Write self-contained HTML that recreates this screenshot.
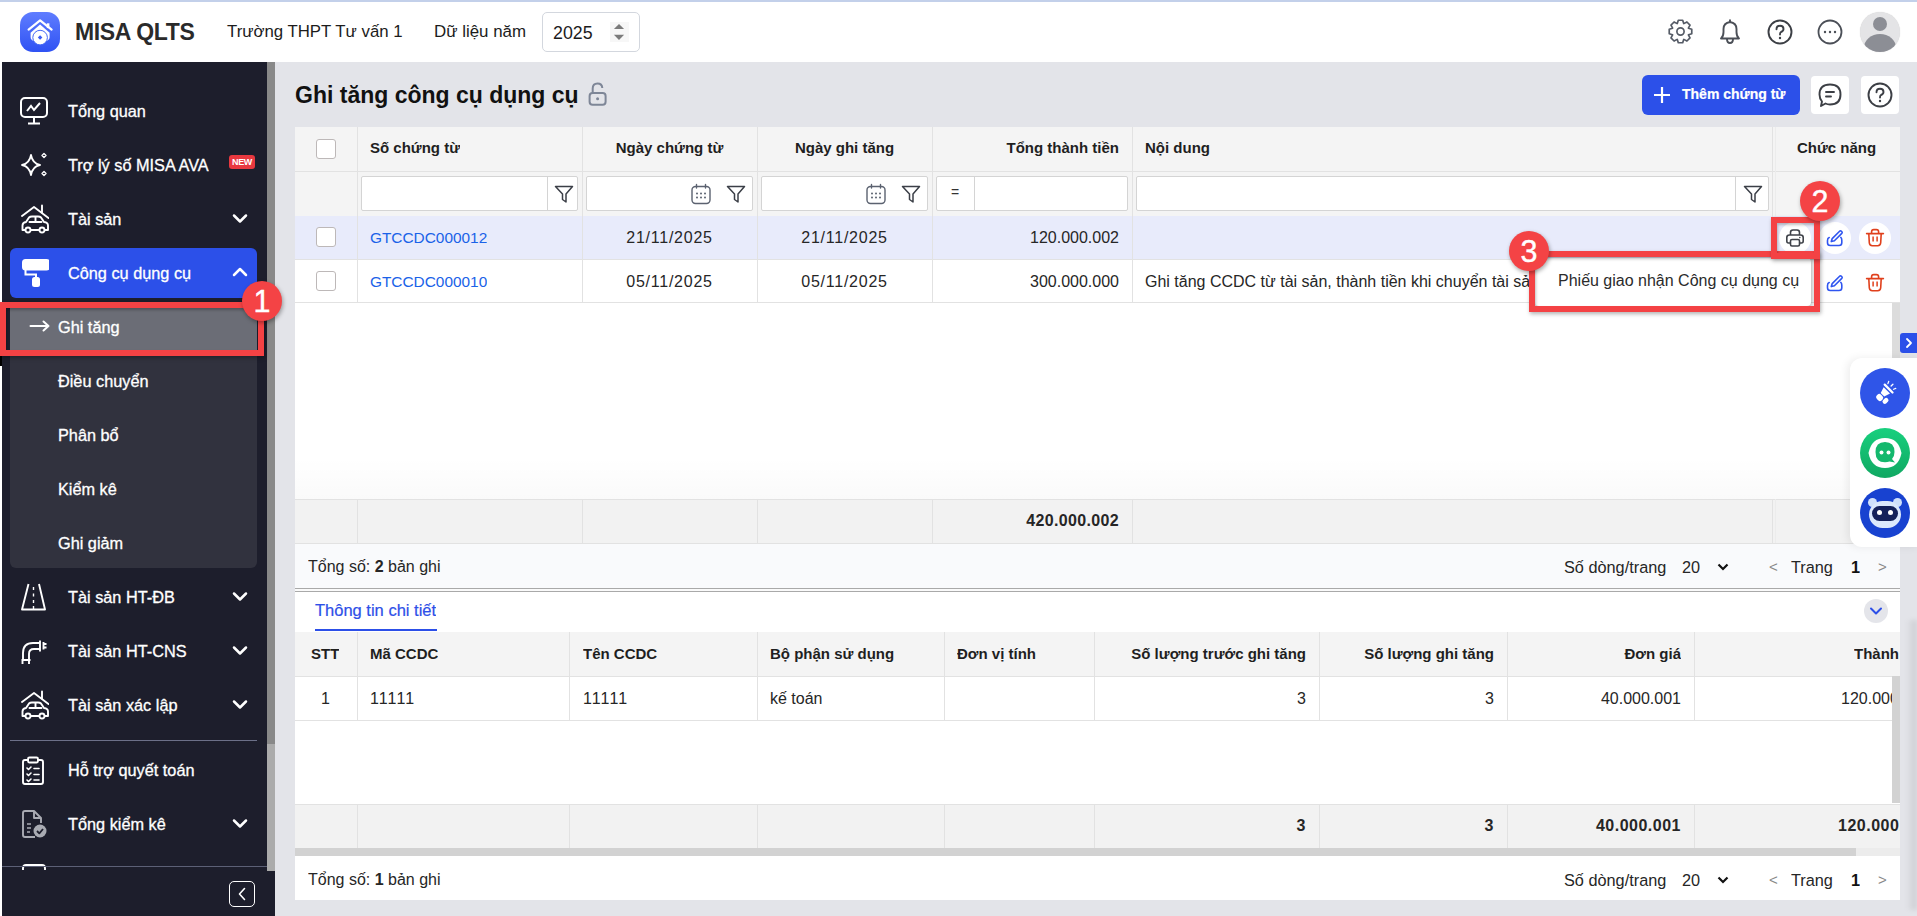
<!DOCTYPE html>
<html><head><meta charset="utf-8">
<style>
*{box-sizing:border-box;margin:0;padding:0}
html,body{width:1917px;height:916px;overflow:hidden;background:#e3e4e9;font-family:"Liberation Sans",sans-serif;color:#212121}
.a{position:absolute}
#hdr{left:0;top:0;width:1917px;height:62px;background:#fff;border-top:2px solid #c3d0ea}
#side{left:2px;top:62px;width:273px;height:854px;background:#1d1e2c;overflow:hidden}
.mi{position:absolute;left:0;width:265px;height:54px;color:#fff;font-size:16.3px}
.mi .t{position:absolute;left:66px;top:0;line-height:54px;white-space:nowrap;-webkit-text-stroke:0.3px #fff}
.mi svg.ic{position:absolute;left:17px;top:12px}
.chev{position:absolute;left:229px;top:21px}
.sub{position:absolute;left:56px;line-height:50px;color:#fff;font-size:16.3px;white-space:nowrap;-webkit-text-stroke:0.3px #fff}
.tbl{background:#fff}
.cell{position:absolute;white-space:nowrap;overflow:hidden}
.vl{position:absolute;width:1px;background:#e2e2e2}
.hl{position:absolute;height:1px;background:#e2e2e2}
.th{font-weight:bold;font-size:15px;color:#1f1f1f}
.cb{position:absolute;width:20px;height:20px;border:1px solid #bdb8b8;border-radius:3px;background:#fff}
.finp{position:absolute;height:35px;border:1px solid #d4d4d4;border-radius:2px;background:#fff}
.badge{position:absolute;width:40px;height:40px;border-radius:50%;background:#f44345;color:#fff;font-size:30.5px;text-align:center;line-height:41px;box-shadow:1px 2px 4px rgba(0,0,0,.35);-webkit-text-stroke:0.4px #fff}
.rbox{position:absolute;border:6px solid #f44244;box-shadow:1px 2px 4px rgba(0,0,0,.3),inset 1px 2px 3px rgba(0,0,0,.25)}
</style></head><body>
<div id="hdr" class="a">
 <div class="a" style="left:20px;top:10px;width:40px;height:40px;border-radius:13px;background:linear-gradient(180deg,#5f7dff 0%,#2f52f3 100%)">
  <svg width="40" height="40" viewBox="0 0 40 40" class="a" style="left:0;top:0"><path d="M8.6 17.6 L20.1 8.3 L31.6 17.6" fill="none" stroke="#fff" stroke-width="2.2" stroke-linecap="round" stroke-linejoin="round"/><rect x="26.8" y="11.3" width="2.6" height="4.8" fill="#fff"/><path d="M10.6 20.8 L20.1 12.4 L29.6 20.8 V25 Q29.6 28 26 29 H14 Q10.6 28 10.6 25 Z" fill="#fff"/><circle cx="20.1" cy="25.6" r="7.3" fill="#fff" stroke="#4367f6" stroke-width="1"/><rect x="18.5" y="23.8" width="3.2" height="3.2" fill="#3b5cf5" transform="rotate(45 20.1 25.4)"/></svg>
 </div>
 <div class="a" style="left:75px;top:16px;font-size:23px;font-weight:bold;color:#2a2a2a;line-height:28px;letter-spacing:-0.35px">MISA QLTS</div>
 <div class="a" style="left:227px;top:19px;font-size:16.8px;color:#1c1c1c;line-height:22px">Trường THPT Tư vấn 1</div>
 <div class="a" style="left:434px;top:19px;font-size:16.9px;color:#1c1c1c;line-height:22px">Dữ liệu năm</div>
 <div class="a" style="left:542px;top:10px;width:98px;height:40px;border:1px solid #d3d7de;border-radius:5px;background:#fff">
  <div class="a" style="left:10px;top:9px;font-size:17.8px;color:#1c1c1c;line-height:22px">2025</div>
  <div class="a" style="left:67px;top:9px;width:19px;height:20px;background:#f7f7f7"></div>
  <svg class="a" style="left:67px;top:9px" width="19" height="20" viewBox="0 0 19 20"><path d="M9 1.9 L14.1 7 H3.9 Z" fill="#7b7b7b"/><path d="M9 18 L14.1 12.8 H3.9 Z" fill="#7b7b7b"/></svg>
 </div>
 <!-- gear -->
 <svg class="a" style="left:1667px;top:16px" width="27" height="27" viewBox="0 0 24 24" fill="none" stroke="#555b66" stroke-width="1.5">
  <path d="M19.05 9.15 L22.01 10.05 L22.01 13.95 L19.05 14.85 L19.00 14.97 L20.46 17.70 L17.70 20.46 L14.97 19.00 L14.85 19.05 L13.95 22.01 L10.05 22.01 L9.15 19.05 L9.03 19.00 L6.30 20.46 L3.54 17.70 L5.00 14.97 L4.95 14.85 L1.99 13.95 L1.99 10.05 L4.95 9.15 L5.00 9.03 L3.54 6.30 L6.30 3.54 L9.03 5.00 L9.15 4.95 L10.05 1.99 L13.95 1.99 L14.85 4.95 L14.97 5.00 L17.70 3.54 L20.46 6.30 L19.00 9.03Z" stroke-linejoin="round"/>
  <circle cx="12" cy="12" r="3.2"/>
 </svg>
 <!-- bell -->
 <svg class="a" style="left:1717px;top:15px" width="26" height="28" viewBox="0 0 26 28" fill="none" stroke="#4b4f57" stroke-width="1.9">
  <path d="M4 21.5 Q6.5 19.5 6.5 15 V12 Q6.5 6 13 5 Q19.5 6 19.5 12 V15 Q19.5 19.5 22 21.5 Z" stroke-linejoin="round"/>
  <path d="M13 2.5 V5"/><path d="M10 22 Q10 26 13 26 Q16 26 16 22"/>
 </svg>
 <!-- help -->
 <svg class="a" style="left:1767px;top:17px" width="26" height="26" viewBox="0 0 26 26" fill="none" stroke="#3c3f45" stroke-width="1.9">
  <circle cx="13" cy="13" r="11.5"/>
  <path d="M9.5 10.2 Q9.5 6.8 13 6.8 Q16.5 6.8 16.5 10 Q16.5 12 14 13 Q13 13.6 13 15.5" stroke-linecap="round"/>
  <circle cx="13" cy="19" r="1.2" fill="#3c3f45" stroke="none"/>
 </svg>
 <!-- more -->
 <svg class="a" style="left:1817px;top:17px" width="26" height="26" viewBox="0 0 26 26" fill="none" stroke="#4b4f57" stroke-width="1.8">
  <circle cx="13" cy="13" r="11.5"/>
  <circle cx="8" cy="13" r="1.2" fill="#4b4f57" stroke="none"/><circle cx="13" cy="13" r="1.2" fill="#4b4f57" stroke="none"/><circle cx="18" cy="13" r="1.2" fill="#4b4f57" stroke="none"/>
 </svg>
 <!-- avatar -->
 <div class="a" style="left:1860px;top:10px;width:40px;height:40px;border-radius:50%;background:#e4e4e6;overflow:hidden;box-shadow:0 0 1px rgba(0,0,0,.2)">
  <div class="a" style="left:13px;top:5px;width:14px;height:14px;border-radius:50%;background:#8c8e95"></div>
  <div class="a" style="left:4px;top:22px;width:32px;height:28px;border-radius:50% 50% 0 0;background:#8c8e95"></div>
 </div>
</div>
<div class="a" style="left:0;top:62px;width:2px;height:854px;background:#fff"></div><div class="a" style="left:0;top:356px;width:2px;height:10px;background:#000"></div>
<div id="side" class="a">
<div class="mi" style="top:22px;"><svg class="ic" width="30" height="30" viewBox="0 0 30 30" fill="none" stroke="#fff" stroke-width="2"><rect x="2" y="2" width="26" height="19" rx="4"/><path d="M8 15 L12 10 L15 14 L21 7"/><path d="M15 21 V27 M9 27.5 H21"/></svg><div class="t">Tổng quan</div></div>
<div class="mi" style="top:76px;"><svg class="ic" width="30" height="30" viewBox="0 0 30 30" fill="none" stroke="#fff" stroke-width="1.8" stroke-linejoin="round"><path d="M12 5 Q13.5 13.5 21 15 Q13.5 16.5 12 25 Q10.5 16.5 3 15 Q10.5 13.5 12 5Z"/><path d="M25 3.5 L27 5.5 L25 7.5 L23 5.5Z" stroke-width="1.4"/><path d="M25 21.5 L27 23.5 L25 25.5 L23 23.5Z" stroke-width="1.4"/></svg><div class="t">Trợ lý số MISA AVA</div><div class="a" style="left:227px;top:17px;width:26px;height:14px;background:#e8383f;border-radius:3px;color:#fff;font-size:9px;font-weight:bold;line-height:14px;text-align:center;letter-spacing:-0.3px">NEW</div></div>
<div class="mi" style="top:130px;"><svg class="ic" width="30" height="30" viewBox="0 0 30 30" fill="none" stroke="#fff" stroke-width="1.9" stroke-linejoin="round" stroke-linecap="round"><path d="M3 12 L15 3 L29.5 14"/><path d="M23 1.5 V8.5"/><path d="M3.5 26 V21.5 Q3.5 18.5 7 18 L10 13.5 Q11 12.5 13 12.5 H19 Q21 12.5 22 13.5 L25 18 Q29 18.5 29 21.5 V26 Z"/><circle cx="9" cy="26" r="2.5" fill="#1d1e2c"/><circle cx="23" cy="26" r="2.5" fill="#1d1e2c"/><path d="M10.5 18 H22.5 M16.5 13 V18"/></svg><div class="t">Tài sản</div><svg class="chev" width="18" height="12" viewBox="0 0 18 12"><path d="M3 2.5 L9 8.5 L15 2.5" fill="none" stroke="#fff" stroke-width="2.5" stroke-linecap="round" stroke-linejoin="round"/></svg></div>
<div class="a" style="left:8px;top:240px;width:247px;height:266px;background:#31323e;border-radius:0 0 6px 6px"></div>
<div class="a" style="left:8px;top:186px;width:247px;height:50px;background:#2c50e9;border-radius:6px"></div>
<div class="mi" style="top:184px;"><svg class="ic" width="30" height="30" viewBox="0 0 30 30"><rect x="3" y="1" width="28" height="11.5" rx="3.5" fill="#fff"/><path d="M6.5 12 V16.5 H17 V20" fill="none" stroke="#fff" stroke-width="2"/><rect x="13" y="19" width="8" height="10" rx="2.5" fill="#fff"/></svg><div class="t">Công cụ dụng cụ</div><svg class="chev" width="18" height="12" viewBox="0 0 18 12" style="top:20px"><path d="M3 9 L9 3 L15 9" fill="none" stroke="#fff" stroke-width="2.5" stroke-linecap="round" stroke-linejoin="round"/></svg></div>
<div class="a" style="left:8px;top:240px;width:247px;height:54px;background:#6b6d76"></div>
<svg class="a" style="left:27px;top:256px" width="22" height="16" viewBox="0 0 22 16"><path d="M1.5 8 H19.5 M14.5 3.5 L19.5 8 L14.5 12.5" fill="none" stroke="#fff" stroke-width="2" stroke-linecap="round" stroke-linejoin="round"/></svg><div class="sub" style="top:240px;left:56px">Ghi tăng</div>
<div class="sub" style="top:294px">Điều chuyển</div>
<div class="sub" style="top:348px">Phân bổ</div>
<div class="sub" style="top:402px">Kiểm kê</div>
<div class="sub" style="top:456px">Ghi giảm</div>
<div class="mi" style="top:508px;"><svg class="ic" width="30" height="30" viewBox="0 0 30 30" fill="none" stroke="#fff" stroke-width="1.9" stroke-linejoin="round"><path d="M9.5 2 L3 27.5 H26 L20 2"/><path d="M14.5 5 V8 M14.5 11.5 V14.5 M14.5 18 V21 M14.5 24 V27" stroke-width="1.4"/></svg><div class="t">Tài sản HT-ĐB</div><svg class="chev" width="18" height="12" viewBox="0 0 18 12"><path d="M3 2.5 L9 8.5 L15 2.5" fill="none" stroke="#fff" stroke-width="2.5" stroke-linecap="round" stroke-linejoin="round"/></svg></div>
<div class="mi" style="top:562px;"><svg class="ic" width="30" height="30" viewBox="0 0 30 30" fill="none" stroke="#fff" stroke-width="1.9" stroke-linejoin="round"><path d="M4 24 V17 Q4 7 14 7 H21"/><path d="M10 24 V18 Q10 13 15 13 H21"/><path d="M21 4.5 V15.5 M24.5 6 V13.5 M24.5 8 H27.5 M24.5 11.5 H27.5"/><path d="M2.5 24 H11.5 M3.5 28 V24 M10 28 V24"/></svg><div class="t">Tài sản HT-CNS</div><svg class="chev" width="18" height="12" viewBox="0 0 18 12"><path d="M3 2.5 L9 8.5 L15 2.5" fill="none" stroke="#fff" stroke-width="2.5" stroke-linecap="round" stroke-linejoin="round"/></svg></div>
<div class="mi" style="top:616px;"><svg class="ic" width="30" height="30" viewBox="0 0 30 30" fill="none" stroke="#fff" stroke-width="1.9" stroke-linejoin="round" stroke-linecap="round"><path d="M3 12 L15 3 L29.5 14"/><path d="M23 1.5 V8.5"/><path d="M3.5 26 V21.5 Q3.5 18.5 7 18 L10 13.5 Q11 12.5 13 12.5 H19 Q21 12.5 22 13.5 L25 18 Q29 18.5 29 21.5 V26 Z"/><circle cx="9" cy="26" r="2.5" fill="#1d1e2c"/><circle cx="23" cy="26" r="2.5" fill="#1d1e2c"/><path d="M10.5 18 H22.5 M16.5 13 V18"/></svg><div class="t">Tài sản xác lập</div><svg class="chev" width="18" height="12" viewBox="0 0 18 12"><path d="M3 2.5 L9 8.5 L15 2.5" fill="none" stroke="#fff" stroke-width="2.5" stroke-linecap="round" stroke-linejoin="round"/></svg></div>
<div class="a" style="left:8px;top:678px;width:247px;height:1px;background:#6c7088"></div>
<div class="mi" style="top:681px;"><svg class="ic" width="30" height="30" viewBox="0 0 30 30" fill="none" stroke="#fff" stroke-width="1.9" stroke-linejoin="round" stroke-linecap="round"><path d="M9 5 H6 Q4 5 4 7 V27 Q4 29 6 29 H22 Q24 29 24 27 V7 Q24 5 22 5 H19"/><rect x="9" y="2.5" width="10" height="5" rx="1.5"/><path d="M8 13 L9.5 14.5 L12 12 M15 13.5 H20 M8 19 L9.5 20.5 L12 18 M15 19.5 H20 M8 25 L9.5 26.5 L12 24 M15 25 H20" stroke-width="1.6"/></svg><div class="t">Hỗ trợ quyết toán</div></div>
<div class="mi" style="top:735px;"><svg class="ic" width="30" height="30" viewBox="0 0 30 30" fill="none" stroke="#a9abb3" stroke-width="1.9" stroke-linejoin="round"><path d="M16 28 H6 Q4 28 4 26 V4 Q4 2 6 2 H15 L22 9 V14"/><path d="M15 2 V9 H22"/><path d="M8 15 H12 M8 19 H12 M8 23 H11" stroke-width="1.6"/><circle cx="21" cy="22" r="6.5" fill="#a9abb3" stroke="none"/><path d="M18 22 L20.3 24.3 L24 20" stroke="#1d1e2c" stroke-width="1.8"/></svg><div class="t">Tổng kiểm kê</div><svg class="chev" width="18" height="12" viewBox="0 0 18 12"><path d="M3 2.5 L9 8.5 L15 2.5" fill="none" stroke="#fff" stroke-width="2.5" stroke-linecap="round" stroke-linejoin="round"/></svg></div>
<svg class="a" style="left:18px;top:802px" width="30" height="6" viewBox="0 0 30 6"><path d="M3 6 V4 Q3 1 6 1 H22 Q25 1 25 4 V6" fill="none" stroke="#fff" stroke-width="1.9"/></svg>
<div class="a" style="left:0;top:804px;width:273px;height:1px;background:#5c6076"></div>
<div class="a" style="left:265px;top:0;width:8px;height:682px;background:#898989"></div>
<div class="a" style="left:265px;top:682px;width:8px;height:127px;background:#ababab"></div>
<div class="a" style="left:227px;top:819px;width:26px;height:26px;border:1.5px solid #fff;border-radius:5px"><svg class="a" style="left:7px;top:5px" width="10" height="14" viewBox="0 0 10 14"><path d="M7.5 1.5 L2.5 7 L7.5 12.5" fill="none" stroke="#fff" stroke-width="1.6" stroke-linecap="round" stroke-linejoin="round"/></svg></div>
</div>
<div class="a" style="left:295px;top:80px;font-size:23px;font-weight:bold;color:#111;line-height:30px">Ghi tăng công cụ dụng cụ</div>
<svg class="a" style="left:586px;top:80px" width="22" height="28" viewBox="0 0 22 28" fill="none" stroke="#7e8697" stroke-width="2"><path d="M6.7 13 V8.5 Q6.7 3.5 11.5 3.5 Q16 3.5 16.3 8"/><rect x="3.6" y="13" width="16" height="11.7" rx="3"/><circle cx="11.6" cy="18.8" r="1.5" fill="#7e8697" stroke="none"/></svg>
<div class="a" style="left:1642px;top:75px;width:158px;height:40px;background:#2c50e9;border-radius:6px"><svg class="a" style="left:11px;top:11px" width="18" height="18" viewBox="0 0 18 18"><path d="M9 1 V17 M1 9 H17" stroke="#fff" stroke-width="2.2"/></svg><div class="a" style="left:40px;top:9px;font-size:14px;font-weight:bold;color:#fff;line-height:20px;-webkit-text-stroke:0.2px #fff">Thêm chứng từ</div></div>
<div class="a" style="left:1811px;top:76px;width:38px;height:38px;background:#fff;border-radius:4px"><svg class="a" style="left:6px;top:6px" width="26" height="26" viewBox="0 0 26 26" fill="none" stroke="#3c3f45" stroke-width="1.9" stroke-linejoin="round"><path d="M13 2.5 Q23.5 2.5 23.5 12.5 Q23.5 22.5 13 22.5 Q10.5 22.5 8.5 21.5 L4 24 L5 19.5 Q2.5 16.5 2.5 12.5 Q2.5 2.5 13 2.5Z"/><path d="M9 10 H17 M9 14.5 H14" stroke-linecap="round"/></svg></div>
<div class="a" style="left:1861px;top:76px;width:38px;height:38px;background:#fff;border-radius:4px"><svg class="a" style="left:6px;top:6px" width="26" height="26" viewBox="0 0 26 26" fill="none" stroke="#3c3f45" stroke-width="1.9"><circle cx="13" cy="13" r="11.5"/><path d="M9.5 10.2 Q9.5 6.8 13 6.8 Q16.5 6.8 16.5 10 Q16.5 12 14 13 Q13 13.6 13 15.5" stroke-linecap="round"/><circle cx="13" cy="19" r="1.2" fill="#3c3f45" stroke="none"/></svg></div>
<div class="a tbl" style="left:295px;top:127px;width:1605px;height:461px;overflow:hidden">
<div class="a" style="left:0;top:0;width:1605px;height:89px;background:#f4f4f4"></div>
<div class="a" style="left:0;top:89px;width:1605px;height:44px;background:#e8ebfb"></div>
<div class="a" style="left:0;top:372px;width:1605px;height:44px;background:#f2f2f2"></div>
<div class="a" style="left:0;top:416px;width:1605px;height:45px;background:#f9fafc"></div>
<div class="hl" style="left:0;top:44px;width:1605px"></div>
<div class="hl" style="left:0;top:132px;width:1605px"></div>
<div class="hl" style="left:0;top:175px;width:1605px"></div>
<div class="a" style="left:0;top:330px;width:1605px;height:42px;background:linear-gradient(180deg,rgba(0,0,0,0),rgba(0,0,0,.018))"></div>
<div class="hl" style="left:0;top:372px;width:1605px"></div>
<div class="hl" style="left:0;top:416px;width:1605px"></div>
<div class="vl" style="left:62px;top:0;height:175px"></div>
<div class="vl" style="left:62px;top:372px;height:44px"></div>
<div class="vl" style="left:287px;top:0;height:175px"></div>
<div class="vl" style="left:287px;top:372px;height:44px"></div>
<div class="vl" style="left:462px;top:0;height:175px"></div>
<div class="vl" style="left:462px;top:372px;height:44px"></div>
<div class="vl" style="left:637px;top:0;height:175px"></div>
<div class="vl" style="left:637px;top:372px;height:44px"></div>
<div class="vl" style="left:837px;top:0;height:175px"></div>
<div class="vl" style="left:837px;top:372px;height:44px"></div>
<div class="vl" style="left:1477px;top:0;height:175px"></div><div class="vl" style="left:1480px;top:0;height:175px;background:#ececec"></div>
<div class="vl" style="left:1477px;top:372px;height:44px"></div><div class="vl" style="left:1480px;top:372px;height:44px;background:#ececec"></div>
<div class="cb" style="left:21px;top:12px"></div>
<div class="cell th" style="left:75px;top:10px;line-height:22px">Số chứng từ</div>
<div class="cell th" style="left:287px;width:175px;text-align:center;top:10px;line-height:22px">Ngày chứng từ</div>
<div class="cell th" style="left:462px;width:175px;text-align:center;top:10px;line-height:22px">Ngày ghi tăng</div>
<div class="cell th" style="left:637px;width:187px;text-align:right;top:10px;line-height:22px">Tổng thành tiền</div>
<div class="cell th" style="left:850px;top:10px;line-height:22px">Nội dung</div>
<div class="cell th" style="left:1478px;width:127px;text-align:center;top:10px;line-height:22px">Chức năng</div>
<div class="finp" style="left:66px;top:49px;width:217px"><div class="a" style="left:185px;top:0;width:1px;height:33px;background:#d4d4d4"></div><div class="a" style="left:191px;top:6px"><svg width="22" height="22" viewBox="0 0 22 22" fill="none" stroke="#3b3f47" stroke-width="1.5" stroke-linejoin="round"><path d="M2.5 3.5 H19.5 L13 11 V19 L9.5 16.5 V11 Z"/></svg></div></div>
<div class="finp" style="left:291px;top:49px;width:167px"><div class="a" style="left:103px;top:6px"><svg width="22" height="22" viewBox="0 0 22 22" fill="none" stroke="#5b6270" stroke-width="1.4"><rect x="2" y="3.5" width="18" height="17" rx="3.5"/><path d="M6.5 1.5 V5 M15.5 1.5 V5" stroke-linecap="round"/><g fill="#5b6270" stroke="none"><circle cx="7" cy="10.5" r="1"/><circle cx="11" cy="10.5" r="1"/><circle cx="15" cy="10.5" r="1"/><circle cx="7" cy="14.5" r="1"/><circle cx="11" cy="14.5" r="1"/><circle cx="15" cy="14.5" r="1"/></g></svg></div><div class="a" style="left:138px;top:6px"><svg width="22" height="22" viewBox="0 0 22 22" fill="none" stroke="#3b3f47" stroke-width="1.5" stroke-linejoin="round"><path d="M2.5 3.5 H19.5 L13 11 V19 L9.5 16.5 V11 Z"/></svg></div></div>
<div class="finp" style="left:466px;top:49px;width:167px"><div class="a" style="left:103px;top:6px"><svg width="22" height="22" viewBox="0 0 22 22" fill="none" stroke="#5b6270" stroke-width="1.4"><rect x="2" y="3.5" width="18" height="17" rx="3.5"/><path d="M6.5 1.5 V5 M15.5 1.5 V5" stroke-linecap="round"/><g fill="#5b6270" stroke="none"><circle cx="7" cy="10.5" r="1"/><circle cx="11" cy="10.5" r="1"/><circle cx="15" cy="10.5" r="1"/><circle cx="7" cy="14.5" r="1"/><circle cx="11" cy="14.5" r="1"/><circle cx="15" cy="14.5" r="1"/></g></svg></div><div class="a" style="left:138px;top:6px"><svg width="22" height="22" viewBox="0 0 22 22" fill="none" stroke="#3b3f47" stroke-width="1.5" stroke-linejoin="round"><path d="M2.5 3.5 H19.5 L13 11 V19 L9.5 16.5 V11 Z"/></svg></div></div>
<div class="finp" style="left:641px;top:49px;width:192px"><div class="a" style="left:37px;top:0;width:1px;height:33px;background:#d4d4d4"></div><div class="a" style="left:14px;top:7px;font-size:14px;color:#333">=</div></div>
<div class="finp" style="left:841px;top:49px;width:633px"><div class="a" style="left:598px;top:0;width:1px;height:33px;background:#d4d4d4"></div><div class="a" style="left:605px;top:6px"><svg width="22" height="22" viewBox="0 0 22 22" fill="none" stroke="#3b3f47" stroke-width="1.5" stroke-linejoin="round"><path d="M2.5 3.5 H19.5 L13 11 V19 L9.5 16.5 V11 Z"/></svg></div></div>
<div class="cb" style="left:21px;top:100px"></div>
<div class="cell" style="left:75px;top:100px;line-height:22px;font-size:15.4px;color:#1a62e8">GTCCDC000012</div>
<div class="cell" style="left:287px;width:175px;text-align:center;top:100px;line-height:22px;font-size:16px;color:#262626;letter-spacing:0.75px">21/11/2025</div>
<div class="cell" style="left:462px;width:175px;text-align:center;top:100px;line-height:22px;font-size:16px;color:#262626;letter-spacing:0.75px">21/11/2025</div>
<div class="cell" style="left:637px;width:187px;text-align:right;top:100px;line-height:22px;font-size:16px;color:#262626">120.000.002</div>
<div class="cb" style="left:21px;top:144px"></div>
<div class="cell" style="left:75px;top:144px;line-height:22px;font-size:15.4px;color:#1a62e8">GTCCDC000010</div>
<div class="cell" style="left:287px;width:175px;text-align:center;top:144px;line-height:22px;font-size:16px;color:#262626;letter-spacing:0.75px">05/11/2025</div>
<div class="cell" style="left:462px;width:175px;text-align:center;top:144px;line-height:22px;font-size:16px;color:#262626;letter-spacing:0.75px">05/11/2025</div>
<div class="cell" style="left:637px;width:187px;text-align:right;top:144px;line-height:22px;font-size:16px;color:#262626">300.000.000</div>
<div class="cell" style="left:850px;width:400px;top:144px;line-height:22px;font-size:16px;color:#262626">Ghi tăng CCDC từ tài sản, thành tiền khi chuyển tài sản</div>
<div class="cell" style="left:637px;width:187px;text-align:right;top:383px;line-height:22px;font-size:16px;font-weight:bold;color:#262626;letter-spacing:0.35px">420.000.002</div>
<div class="cell" style="left:13px;top:428.5px;line-height:22px;font-size:16px;color:#262626">Tổng số: <b>2</b> bản ghi</div>
<div class="cell" style="left:1269px;top:428.5px;line-height:22px;font-size:16.3px;color:#262626">Số dòng/trang</div>
<div class="cell" style="left:1387px;top:428.5px;line-height:22px;font-size:16.3px;color:#262626">20</div>
<svg class="a" style="left:1421px;top:433.5px" width="14" height="12" viewBox="0 0 14 12"><path d="M2.5 3.5 L7 8 L11.5 3.5" fill="none" stroke="#111" stroke-width="2.2"/></svg>
<div class="cell" style="left:1474px;top:428.5px;line-height:22px;font-size:15px;color:#888">&lt;</div>
<div class="cell" style="left:1496px;top:428.5px;line-height:22px;font-size:16.3px;color:#262626">Trang</div>
<div class="cell" style="left:1556px;top:428.5px;line-height:22px;font-size:16.3px;font-weight:bold;color:#111">1</div>
<div class="cell" style="left:1583px;top:428.5px;line-height:22px;font-size:15px;color:#888">&gt;</div>
</div>
<div class="a" style="left:1779px;top:222px;width:32px;height:32px;border-radius:50%;background:#fff"></div>
<div class="a" style="left:1819px;top:222px;width:32px;height:32px;border-radius:50%;background:#fff"></div>
<div class="a" style="left:1859px;top:222px;width:32px;height:32px;border-radius:50%;background:#fff"></div>
<div class="a" style="left:1785px;top:228px"><svg width="20" height="20" viewBox="0 0 20 20" fill="none" stroke="#3f4249" stroke-width="1.6" stroke-linejoin="round"><path d="M5.5 7 V4.5 Q5.5 2 8 2 H12 Q14.5 2 14.5 4.5 V7"/><path d="M5 15 H3.5 Q1.8 15 1.8 13 V9.5 Q1.8 7 4.5 7 H15.5 Q18.2 7 18.2 9.5 V13 Q18.2 15 16.5 15 H15"/><rect x="5.5" y="11.5" width="9" height="6.5" rx="1.5"/><circle cx="14.8" cy="9.6" r="0.8" fill="#3f4249" stroke="none"/></svg></div>
<div class="a" style="left:1825px;top:228px"><svg width="20" height="20" viewBox="0 0 20 20" fill="none" stroke="#2f55f0" stroke-width="1.6" stroke-linejoin="round" stroke-linecap="round"><path d="M6.3 13.6 L7.2 10.6 L14.6 3.2 Q15.6 2.4 16.4 3.2 L16.9 3.7 Q17.6 4.5 16.8 5.4 L9.4 12.8 Z"/><path d="M4.2 9.6 Q2.5 10.2 2.5 12.4 V14.8 Q2.5 17.5 5.3 17.5 H14 Q16.8 17.5 16.8 14.8 V12.2 Q16.8 10.2 15.8 9.4"/></svg></div>
<div class="a" style="left:1865px;top:228px"><svg width="20" height="20" viewBox="0 0 20 20" fill="none" stroke="#e0401c" stroke-width="1.6" stroke-linejoin="round"><path d="M1.6 5.6 H18.4" stroke-linecap="round"/><path d="M6.6 5.4 V3.8 Q6.6 1.6 8.8 1.6 H11.4 Q13.6 1.6 13.6 3.8 V5.4"/><path d="M3.8 5.8 L4.3 14.8 Q4.5 17.7 7.3 17.7 H12.7 Q15.5 17.7 15.7 14.8 L16.2 5.8"/><path d="M8.1 8.6 V13.6 M12.1 8.6 V13.6" stroke-width="1.5"/></svg></div>
<div class="a" style="left:1825px;top:273px"><svg width="20" height="20" viewBox="0 0 20 20" fill="none" stroke="#2f55f0" stroke-width="1.6" stroke-linejoin="round" stroke-linecap="round"><path d="M6.3 13.6 L7.2 10.6 L14.6 3.2 Q15.6 2.4 16.4 3.2 L16.9 3.7 Q17.6 4.5 16.8 5.4 L9.4 12.8 Z"/><path d="M4.2 9.6 Q2.5 10.2 2.5 12.4 V14.8 Q2.5 17.5 5.3 17.5 H14 Q16.8 17.5 16.8 14.8 V12.2 Q16.8 10.2 15.8 9.4"/></svg></div>
<div class="a" style="left:1865px;top:273px"><svg width="20" height="20" viewBox="0 0 20 20" fill="none" stroke="#e0401c" stroke-width="1.6" stroke-linejoin="round"><path d="M1.6 5.6 H18.4" stroke-linecap="round"/><path d="M6.6 5.4 V3.8 Q6.6 1.6 8.8 1.6 H11.4 Q13.6 1.6 13.6 3.8 V5.4"/><path d="M3.8 5.8 L4.3 14.8 Q4.5 17.7 7.3 17.7 H12.7 Q15.5 17.7 15.7 14.8 L16.2 5.8"/><path d="M8.1 8.6 V13.6 M12.1 8.6 V13.6" stroke-width="1.5"/></svg></div>
<div class="a" style="left:1892px;top:303px;width:8px;height:196px;background:#dcdcdc"></div>
<div class="a" style="left:295px;top:588px;width:1605px;height:1px;background:#a9a9a9"></div>
<div class="a" style="left:295px;top:589px;width:1605px;height:2px;background:#fafafa"></div>
<div class="a" style="left:295px;top:591px;width:1605px;height:1px;background:#a9a9a9"></div>
<div class="a tbl" style="left:295px;top:592px;width:1605px;height:308px;overflow:hidden">
<div class="cell" style="left:20px;top:7px;line-height:22px;font-size:16.5px;color:#2d4fe8;-webkit-text-stroke:0.2px #2d4fe8">Thông tin chi tiết</div>
<div class="a" style="left:20px;top:37px;width:122px;height:2px;background:#2c4fe8"></div>
<div class="a" style="left:1569px;top:7px;width:24px;height:24px;border-radius:50%;background:#e4e5ea"><svg class="a" style="left:5px;top:7px" width="14" height="10" viewBox="0 0 14 10"><path d="M2 2.5 L7 7.5 L12 2.5" fill="none" stroke="#2c4fe8" stroke-width="2" stroke-linecap="round" stroke-linejoin="round"/></svg></div>
<div class="a" style="left:0;top:40px;width:1605px;height:44px;background:#f4f4f4"></div>
<div class="a" style="left:0;top:212px;width:1605px;height:44px;background:#f2f2f2"></div>
<div class="hl" style="left:0;top:84px;width:1605px"></div>
<div class="hl" style="left:0;top:128px;width:1605px"></div>
<div class="hl" style="left:0;top:212px;width:1605px"></div>
<div class="vl" style="left:62px;top:40px;height:88px"></div>
<div class="vl" style="left:62px;top:212px;height:44px"></div>
<div class="vl" style="left:274px;top:40px;height:88px"></div>
<div class="vl" style="left:274px;top:212px;height:44px"></div>
<div class="vl" style="left:462px;top:40px;height:88px"></div>
<div class="vl" style="left:462px;top:212px;height:44px"></div>
<div class="vl" style="left:649px;top:40px;height:88px"></div>
<div class="vl" style="left:649px;top:212px;height:44px"></div>
<div class="vl" style="left:799px;top:40px;height:88px"></div>
<div class="vl" style="left:799px;top:212px;height:44px"></div>
<div class="vl" style="left:1024px;top:40px;height:88px"></div>
<div class="vl" style="left:1024px;top:212px;height:44px"></div>
<div class="vl" style="left:1212px;top:40px;height:88px"></div>
<div class="vl" style="left:1212px;top:212px;height:44px"></div>
<div class="vl" style="left:1399px;top:40px;height:88px"></div>
<div class="vl" style="left:1399px;top:212px;height:44px"></div>
<div class="cell th" style="left:16px;top:51px;line-height:22px">STT</div>
<div class="cell th" style="left:75px;top:51px;line-height:22px">Mã CCDC</div>
<div class="cell th" style="left:288px;top:51px;line-height:22px">Tên CCDC</div>
<div class="cell th" style="left:475px;top:51px;line-height:22px">Bộ phận sử dụng</div>
<div class="cell th" style="left:662px;top:51px;line-height:22px">Đơn vị tính</div>
<div class="cell th" style="left:611px;width:400px;text-align:right;top:51px;line-height:22px">Số lượng trước ghi tăng</div>
<div class="cell th" style="left:799px;width:400px;text-align:right;top:51px;line-height:22px">Số lượng ghi tăng</div>
<div class="cell th" style="left:986px;width:400px;text-align:right;top:51px;line-height:22px">Đơn giá</div>
<div class="cell th" style="left:1559px;top:51px;line-height:22px">Thành tiền</div>
<div class="cell" style="left:-365px;width:400px;text-align:right;top:96px;line-height:22px;font-size:16px;color:#262626">1</div>
<div class="cell" style="left:75px;top:96px;line-height:22px;font-size:16px;color:#262626;letter-spacing:1.1px">11111</div>
<div class="cell" style="left:288px;top:96px;line-height:22px;font-size:16px;color:#262626;letter-spacing:1.1px">11111</div>
<div class="cell" style="left:475px;top:96px;line-height:22px;font-size:16px;color:#262626">kế toán</div>
<div class="cell" style="left:611px;width:400px;text-align:right;top:96px;line-height:22px;font-size:16px;color:#262626">3</div>
<div class="cell" style="left:799px;width:400px;text-align:right;top:96px;line-height:22px;font-size:16px;color:#262626">3</div>
<div class="cell" style="left:986px;width:400px;text-align:right;top:96px;line-height:22px;font-size:16px;color:#262626">40.000.001</div>
<div class="cell" style="left:1546px;top:96px;line-height:22px;font-size:16px;color:#262626">120.000.002</div>
<div class="cell" style="left:611px;width:400px;text-align:right;top:223px;line-height:22px;font-weight:bold;font-size:16px;letter-spacing:0.5px;color:#262626">3</div>
<div class="cell" style="left:799px;width:400px;text-align:right;top:223px;line-height:22px;font-weight:bold;font-size:16px;letter-spacing:0.5px;color:#262626">3</div>
<div class="cell" style="left:986px;width:400px;text-align:right;top:223px;line-height:22px;font-weight:bold;font-size:16px;letter-spacing:0.5px;color:#262626">40.000.001</div>
<div class="cell" style="left:1543px;top:223px;line-height:22px;font-weight:bold;font-size:16px;letter-spacing:0.5px;color:#262626">120.000.002</div>
<div class="a" style="left:1597px;top:84px;width:8px;height:127px;background:#d2d2d2"></div>
<div class="a" style="left:0;top:256px;width:1605px;height:8px;background:#ececec"></div>
<div class="a" style="left:0;top:256px;width:1561px;height:8px;background:#d2d2d2"></div>
<div class="cell" style="left:13px;top:277px;line-height:22px;font-size:16px;color:#262626">Tổng số: <b>1</b> bản ghi</div>
<div class="cell" style="left:1269px;top:277px;line-height:22px;font-size:16.3px;color:#262626">Số dòng/trang</div>
<div class="cell" style="left:1387px;top:277px;line-height:22px;font-size:16.3px;color:#262626">20</div>
<svg class="a" style="left:1421px;top:282px" width="14" height="12" viewBox="0 0 14 12"><path d="M2.5 3.5 L7 8 L11.5 3.5" fill="none" stroke="#111" stroke-width="2.2"/></svg>
<div class="cell" style="left:1474px;top:277px;line-height:22px;font-size:15px;color:#888">&lt;</div>
<div class="cell" style="left:1496px;top:277px;line-height:22px;font-size:16.3px;color:#262626">Trang</div>
<div class="cell" style="left:1556px;top:277px;line-height:22px;font-size:16.3px;font-weight:bold;color:#111">1</div>
<div class="cell" style="left:1583px;top:277px;line-height:22px;font-size:15px;color:#888">&gt;</div>
</div>
<div class="a" style="left:1906px;top:620px;width:11px;height:290px;background:linear-gradient(90deg,rgba(0,0,0,0),rgba(0,0,0,.10));filter:blur(2px)"></div>
<div class="a" style="left:1900px;top:333px;width:17px;height:20px;background:#2c50e9;border-radius:3px 0 0 3px"><svg class="a" style="left:4px;top:4px" width="10" height="12" viewBox="0 0 10 12"><path d="M3 2 L7 6 L3 10" fill="none" stroke="#fff" stroke-width="1.8" stroke-linecap="round" stroke-linejoin="round"/></svg></div>
<div class="a" style="left:1850px;top:358px;width:70px;height:189px;background:#fff;border-radius:12px 0 0 12px;box-shadow:-3px 0 8px rgba(0,0,0,.07)">
 <div class="a" style="left:10px;top:10px;width:50px;height:50px;border-radius:50%;background:#2f55e8"><svg class="a" style="left:0;top:0" width="50" height="50" viewBox="0 0 50 50"><g transform="rotate(45 26 26)" fill="#fff"><path d="M18.5 20.3 H29.5" stroke="#fff" stroke-width="2.3" stroke-linecap="round"/><path d="M19.5 22.8 H28.5 L26.5 29 H21.5 Z"/><rect x="20.5" y="30" width="7" height="6" rx="2.6"/><rect x="28.3" y="28" width="4.5" height="6.5" rx="2.2"/><path d="M20 17.3 L19 15.2 M24 16.8 V14.2 M28 17.3 L29 15.2" stroke="#fff" stroke-width="1.3" stroke-linecap="round"/></g></svg></div>
 <div class="a" style="left:10px;top:70px;width:50px;height:50px;border-radius:50%;background:linear-gradient(180deg,#18d07e,#10a862)"><svg class="a" style="left:0;top:0" width="50" height="50" viewBox="0 0 50 50"><path d="M25 10 Q38.5 10 41.5 25 Q38.5 40 25 40 Q11.5 40 8.5 25 Q11.5 10 25 10Z" fill="#fff"/><path d="M25 14 Q34.5 14 34.5 24 Q34.5 28.5 32 31 L35 34.5 L29.5 33.5 Q27.5 34.3 25 34.3 Q15.5 34.3 15.5 24 Q15.5 14 25 14Z" fill="#14b86d"/><circle cx="21.5" cy="24.5" r="2" fill="#fff"/><circle cx="28.5" cy="24.5" r="2" fill="#fff"/></svg></div>
 <div class="a" style="left:10px;top:130px;width:50px;height:50px;border-radius:50%;background:#1842d0;overflow:hidden"><div class="a" style="left:8px;top:10px;width:9px;height:9px;border-radius:50%;background:#cfe0fb"></div><div class="a" style="left:33px;top:10px;width:9px;height:9px;border-radius:50%;background:#cfe0fb"></div><div class="a" style="left:9px;top:13px;width:32px;height:27px;border-radius:14px;background:#dbe8fc"></div><div class="a" style="left:12px;top:18px;width:26px;height:15px;border-radius:8px;background:#14215a"></div><div class="a" style="left:17px;top:22px;width:5px;height:5px;border-radius:50%;background:#fff"></div><div class="a" style="left:28px;top:22px;width:5px;height:5px;border-radius:50%;background:#fff"></div></div>
</div>
<div class="rbox" style="left:0;top:302px;width:264px;height:54px"></div>
<div class="badge" style="left:242px;top:281px">1</div>
<div class="a" style="left:1535px;top:258px;width:276px;height:48px;background:#fff;border-radius:4px;box-shadow:1px 1px 4px rgba(0,0,0,.35)"><div class="a" style="left:23px;top:12px;font-size:16px;color:#2b2b2b;line-height:22px;white-space:nowrap">Phiếu giao nhận Công cụ dụng cụ</div></div>
<div class="rbox" style="left:1529px;top:251px;width:291px;height:61px"></div>
<div class="rbox" style="left:1771px;top:217px;width:49px;height:42px"></div>
<div class="badge" style="left:1800px;top:181px">2</div>
<div class="badge" style="left:1509px;top:231px">3</div>
</body></html>
